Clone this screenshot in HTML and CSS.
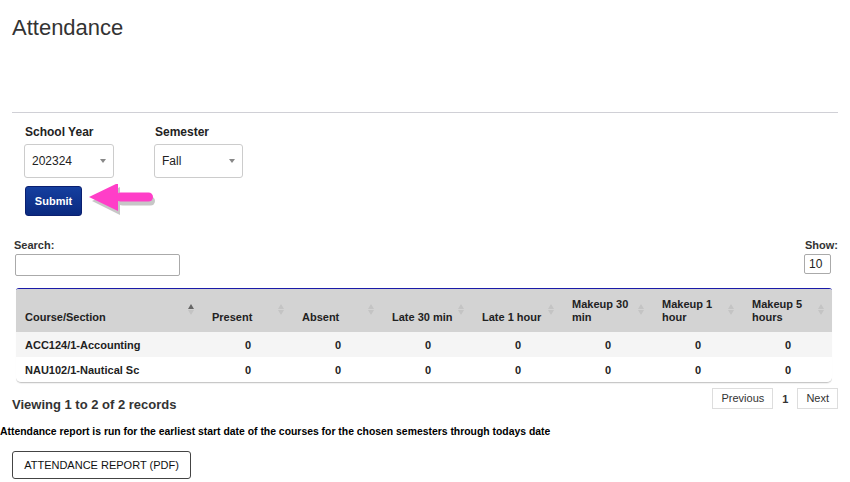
FILE: index.html
```html
<!DOCTYPE html>
<html lang="en">
<head>
    <meta charset="UTF-8">
    <title>Attendance</title>
    <link rel="stylesheet" href="styles.css">
</head>
<body>
    <div class="page-header">
        <h1>Attendance</h1>
    </div>
    <hr class="divider">

    <form class="filters">
        <div class="filter-row">
            <div class="field">
                <label for="schoolYear">School Year</label>
                <div class="select-wrap year">
                    <select id="schoolYear">
                        <option>202324</option>
                    </select>
                </div>
            </div>
            <div class="field">
                <label for="semester">Semester</label>
                <div class="select-wrap semester">
                    <select id="semester">
                        <option>Fall</option>
                    </select>
                </div>
            </div>
        </div>
        <div class="submit-row">
            <button type="button" class="btn-submit">Submit</button>
            <svg class="arrow" width="72" height="36" viewBox="0 0 72 36">
                <g transform="translate(2,3)" fill="#9a9a9a" opacity="0.55">
                    <polygon points="3,14 31,0 31,28"/>
                    <rect x="29" y="9.5" width="37" height="9" rx="4.5"/>
                </g>
                <g fill="#ff3ec8">
                    <polygon points="2,13 31,-1 31,27"/>
                    <rect x="29" y="8.5" width="37" height="9" rx="4.5"/>
                </g>
            </svg>
        </div>
    </form>

    <div class="table-tools">
        <div class="tool">
            <label for="search">Search:</label>
            <input type="text" id="search" class="search-input">
        </div>
        <div class="tool show">
            <label for="show">Show:</label>
            <input type="text" id="show" class="show-input" value="10">
        </div>
    </div>

    <div class="table-wrap">
        <table class="grid">
            <thead>
                <tr>
                    <th class="col-course">Course/Section<span class="sort active"></span></th>
                    <th>Present<span class="sort"></span></th>
                    <th>Absent<span class="sort"></span></th>
                    <th>Late 30 min<span class="sort"></span></th>
                    <th>Late 1 hour<span class="sort"></span></th>
                    <th>Makeup 30 min<span class="sort"></span></th>
                    <th>Makeup 1 hour<span class="sort"></span></th>
                    <th>Makeup 5 hours<span class="sort"></span></th>
                </tr>
            </thead>
            <tbody>
                <tr class="odd">
                    <td class="course">ACC124/1-Accounting</td>
                    <td>0</td><td>0</td><td>0</td><td>0</td><td>0</td><td>0</td><td>0</td>
                </tr>
                <tr>
                    <td class="course">NAU102/1-Nautical Sc</td>
                    <td>0</td><td>0</td><td>0</td><td>0</td><td>0</td><td>0</td><td>0</td>
                </tr>
            </tbody>
        </table>
    </div>

    <div class="table-footer">
        <div class="info">Viewing 1 to 2 of 2 records</div>
        <div class="pager">
            <a class="page-btn">Previous</a>
            <span class="page-current">1</span>
            <a class="page-btn">Next</a>
        </div>
    </div>

    <p class="note">Attendance report is run for the earliest start date of the courses for the chosen semesters through todays date</p>

    <div class="report">
        <button type="button" class="btn-report">ATTENDANCE REPORT (PDF)</button>
    </div>
</body>
</html>
```

FILE: styles.css
```css
body {
    margin: 0;
    font-family: "Liberation Sans", Arial, sans-serif;
    color: #333;
    background: #fff;
}
.page-header {
    padding: 0 12px;
    height: 112px;
    box-sizing: border-box;
    padding-top: 15px;
}
h1 {
    margin: 0;
    font-size: 22px;
    font-weight: normal;
    color: #333;
    line-height: 25px;
}
.divider {
    margin: 0 12px 0 12px;
    border: none;
    border-top: 1px solid #d0d0d6;
}
.filters {
    padding: 12px 0 0 24px;
}
.filter-row {
    display: flex;
    gap: 40px;
}
.field label {
    display: block;
    font-size: 12px;
    font-weight: bold;
    color: #222;
    margin: 0 0 4px 1px;
    line-height: 15px;
}
.select-wrap {
    position: relative;
    height: 34px;
    box-sizing: border-box;
}
.select-wrap.year { width: 90px; }
.select-wrap.semester { width: 89px; }
.select-wrap select {
    appearance: none;
    -webkit-appearance: none;
    width: 100%;
    height: 34px;
    border: 1px solid #ccc;
    border-radius: 3px;
    background: #fff;
    padding: 0 0 0 7px;
    font-family: inherit;
    font-size: 12px;
    color: #222;
}
.select-wrap::after {
    content: "";
    position: absolute;
    right: 8px;
    top: 15px;
    border-left: 3px solid transparent;
    border-right: 3px solid transparent;
    border-top: 4px solid #888;
}
.submit-row {
    display: flex;
    align-items: center;
    margin-top: 8px;
    margin-left: 1px;
    height: 30px;
}
.btn-submit {
    width: 57px;
    height: 30px;
    border: 1px solid #0a1f70;
    border-radius: 3px;
    background: linear-gradient(#153f9f, #0a2a80);
    color: #fff;
    font-family: inherit;
    font-size: 11px;
    font-weight: bold;
    padding: 0;
}
.arrow {
    margin-left: 5px;
    margin-top: 2px;
}
.table-tools {
    display: flex;
    justify-content: space-between;
    padding: 23px 12px 0 14px;
}
.tool label {
    display: block;
    font-size: 11px;
    font-weight: bold;
    line-height: 13px;
    color: #333;
}
.search-input {
    margin: 2px 0 0 1px;
    width: 165px;
    height: 22px;
    box-sizing: border-box;
    border: 1px solid #aaa;
    border-radius: 2px;
}
.show {
    text-align: left;
}
.show-input {
    margin: 2px 0 0 -1px;
    width: 27px;
    height: 20px;
    box-sizing: border-box;
    border: 1px solid #aaa;
    border-radius: 2px;
    font-family: inherit;
    font-size: 12px;
    padding: 0 4px;
    color: #222;
}
.table-wrap {
    margin: 12px 18px 0 16px;
    border-top: 1px solid #1a1aa8;
    border-bottom: 1px solid #c8c8c8;
    border-radius: 3px 3px 5px 5px;
    overflow: hidden;
    box-shadow: 0 1px 1px rgba(0, 0, 0, 0.06);
}
.grid {
    width: 100%;
    border-collapse: collapse;
    table-layout: fixed;
    font-size: 11px;
    color: #222;
}
.grid th {
    position: relative;
    background: #d3d3d3;
    height: 43px;
    box-sizing: border-box;
    padding: 6px 20px 8px 9px;
    text-align: left;
    vertical-align: bottom;
    font-weight: bold;
    line-height: 13px;
    width: 90px;
}
.grid th.col-course {
    width: 187px;
}
.sort {
    position: absolute;
    right: 9px;
    top: 15px;
    width: 6px;
    height: 11px;
}
.sort::before,
.sort::after {
    content: "";
    position: absolute;
    left: 0;
    border-left: 3px solid transparent;
    border-right: 3px solid transparent;
}
.sort::before {
    top: 0;
    border-bottom: 5px solid #c4c4c4;
}
.sort::after {
    top: 6px;
    border-top: 5px solid #c4c4c4;
}
.sort.active::before {
    border-bottom-color: #666;
}
.grid td {
    height: 25px;
    padding: 0 9px;
    text-align: center;
    font-weight: bold;
}
.grid td.course {
    text-align: left;
}
.grid tr.odd td {
    background: #f5f5f5;
}
.table-footer {
    display: flex;
    justify-content: space-between;
    align-items: flex-start;
    padding: 4px 12px 0 12px;
}
.info {
    font-size: 13px;
    font-weight: bold;
    margin-top: 10px;
    color: #333;
}
.pager {
    display: flex;
    align-items: center;
    font-size: 11px;
    margin-top: 1px;
}
.page-btn {
    display: inline-block;
    border: 1px solid #ddd;
    padding: 0 8px;
    height: 19px;
    line-height: 19px;
    color: #333;
}
.page-current {
    font-weight: bold;
    padding: 0 9px;
}
.note {
    margin: 14px 0 0 0;
    font-size: 10.4px;
    font-weight: bold;
    color: #000;
}
.report {
    padding: 14px 12px 0 12px;
}
.btn-report {
    height: 28px;
    width: 179px;
    border: 1px solid #444;
    border-radius: 3px;
    background: #fff;
    font-family: inherit;
    font-size: 11px;
    color: #111;
    padding: 0;
}
```
